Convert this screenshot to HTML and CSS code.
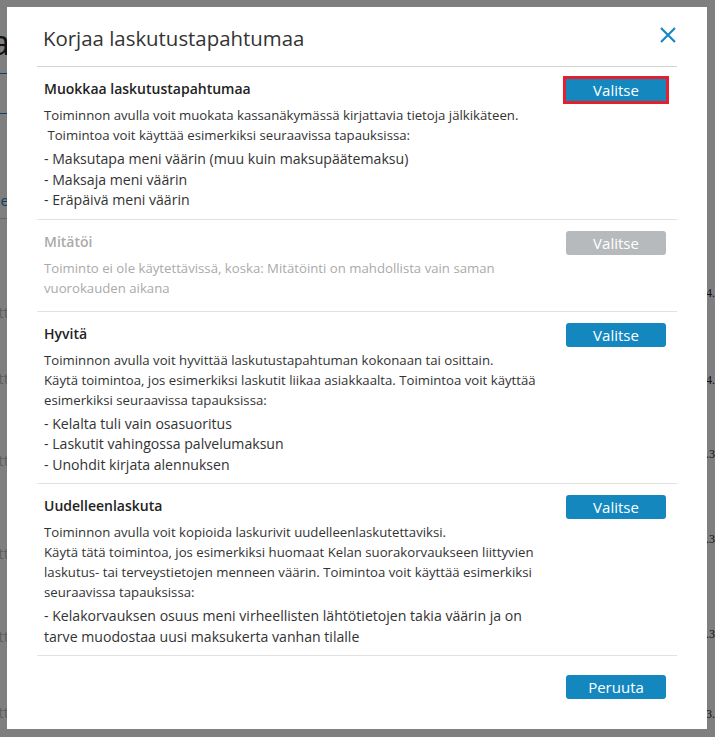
FILE: index.html
```html
<!DOCTYPE html>
<html lang="fi">
<head>
<meta charset="utf-8">
<title>Korjaa laskutustapahtumaa</title>
<link rel="stylesheet" href="styles.css">
</head>
<body>
<div class="bg">
  <div class="bg-left">
    <div class="bg-title"><span>a</span></div>
    <div class="bg-line blue l1"></div>
    <div class="bg-line blue l2"></div>
    <div class="bg-link"><span>e</span></div>
    <div class="bg-line grey"></div>
    <div class="bg-rows">
      <div class="bg-row r1"><span>tt</span></div>
      <div class="bg-row r2"><span>tt</span></div>
      <div class="bg-row r3"><span>tt</span></div>
      <div class="bg-row r4"><span>tt</span></div>
      <div class="bg-row r5"><span>tt</span></div>
      <div class="bg-row r6"><span>tt</span></div>
    </div>
  </div>
  <div class="bg-mid"></div>
  <div class="bg-right">
    <div class="bg-num n1">4.2</div>
    <div class="bg-num n2">4.2</div>
    <div class="bg-num n3">.3</div>
    <div class="bg-num n4">.3</div>
    <div class="bg-num n5">.3</div>
    <div class="bg-num n6">3.2</div>
  </div>
</div>
<div class="overlay"></div>
<div class="modal" role="dialog">
  <div class="modal-header">
    <h1 class="modal-title">Korjaa laskutustapahtumaa</h1>
    <button class="close" aria-label="Sulje">
      <svg width="18" height="18" viewBox="0 0 18 18"><path d="M2 2 L16 16 M16 2 L2 16" stroke="#1b86c1" stroke-width="2.2" fill="none"/></svg>
    </button>
  </div>

  <div class="section">
    <div class="section-body">
      <h2 class="section-title">Muokkaa laskutustapahtumaa</h2>
      <p class="desc">Toiminnon avulla voit muokata kassanäkymässä kirjattavia tietoja jälkikäteen.<br>&nbsp;Toimintoa voit käyttää esimerkiksi seuraavissa tapauksissa:</p>
      <ul class="list">
        <li>- Maksutapa meni väärin (muu kuin maksupäätemaksu)</li>
        <li>- Maksaja meni väärin</li>
        <li>- Eräpäivä meni väärin</li>
      </ul>
    </div>
    <span class="marker"><button class="btn btn-marked">Valitse</button></span>
  </div>

  <div class="section">
    <div class="section-body disabled">
      <h2 class="section-title">Mitätöi</h2>
      <p class="desc">Toiminto ei ole käytettävissä, koska: Mitätöinti on mahdollista vain saman<br>vuorokauden aikana</p>
      <div class="list-empty"></div>
    </div>
    <button class="btn btn-disabled">Valitse</button>
  </div>

  <div class="section">
    <div class="section-body">
      <h2 class="section-title">Hyvitä</h2>
      <p class="desc">Toiminnon avulla voit hyvittää laskutustapahtuman kokonaan tai osittain.<br>Käytä toimintoa, jos esimerkiksi laskutit liikaa asiakkaalta. Toimintoa voit käyttää<br>esimerkiksi seuraavissa tapauksissa:</p>
      <ul class="list">
        <li>- Kelalta tuli vain osasuoritus</li>
        <li>- Laskutit vahingossa palvelumaksun</li>
        <li>- Unohdit kirjata alennuksen</li>
      </ul>
    </div>
    <button class="btn">Valitse</button>
  </div>

  <div class="section">
    <div class="section-body">
      <h2 class="section-title">Uudelleenlaskuta</h2>
      <p class="desc">Toiminnon avulla voit kopioida laskurivit uudelleenlaskutettaviksi.<br>Käytä tätä toimintoa, jos esimerkiksi huomaat Kelan suorakorvaukseen liittyvien<br>laskutus- tai terveystietojen menneen väärin. Toimintoa voit käyttää esimerkiksi<br>seuraavissa tapauksissa:</p>
      <ul class="list">
        <li>- Kelakorvauksen osuus meni virheellisten lähtötietojen takia väärin ja on<br>tarve muodostaa uusi maksukerta vanhan tilalle</li>
      </ul>
    </div>
    <button class="btn">Valitse</button>
  </div>

  <div class="modal-footer">
    <button class="btn">Peruuta</button>
  </div>
</div>
</body>
</html>
```

FILE: styles.css
```css
* { box-sizing: border-box; }
html, body { margin: 0; padding: 0; }
body {
  width: 715px;
  height: 737px;
  overflow: hidden;
  background: #fff;
  font-family: "Open Sans", "Noto Sans", sans-serif;
  color: #333;
}

/* background page (under the overlay) */
.bg {
  display: flex;
  height: 737px;
}
.bg-left {
  width: 8px;
  display: flex;
  flex-direction: column;
}
.bg-title, .bg-link, .bg-row {
  display: flex;
  justify-content: flex-end;
  white-space: nowrap;
}
.bg-title {
  margin-top: 22px;
  margin-right: -2px;
  font-size: 34px;
  line-height: 40px;
  color: #222;
}
.bg-line { height: 1px; width: 8px; }
.bg-line.blue { background: #2a7fb8; }
.bg-line.l1 { margin-top: 11px; }
.bg-line.l2 { margin-top: 39px; }
.bg-line.grey { background: #ccc; margin-top: 8px; }
.bg-link {
  margin-top: 76px;
  margin-right: -1px;
  font-size: 15px;
  line-height: 20px;
  color: #2a7fb8;
}
.bg-rows { display: flex; flex-direction: column; }
.bg-row {
  font-size: 15px;
  line-height: 18px;
  color: #bbb;
  margin-right: -1px;
}
.bg-row.r1 { margin-top: 84px; }
.bg-row.r2 { margin-top: 48px; }
.bg-row.r3 { margin-top: 64px; }
.bg-row.r4 { margin-top: 75px; }
.bg-row.r5 { margin-top: 65px; }
.bg-row.r6 { margin-top: 58px; }
.bg-mid { flex: 1; }
.bg-right {
  width: 9px;
  display: flex;
  flex-direction: column;
  white-space: nowrap;
  font-family: "Liberation Serif", serif;
  font-size: 12px;
  line-height: 14px;
  color: #222;
}
.bg-num.n1 { margin-top: 286px; }
.bg-num.n2 { margin-top: 73px; }
.bg-num.n3 { margin-top: 60px; }
.bg-num.n4 { margin-top: 71px; }
.bg-num.n5 { margin-top: 81px; }
.bg-num.n6 { margin-top: 66px; }

.overlay {
  position: fixed;
  inset: 0;
  background: rgba(0, 0, 0, 0.5);
}

/* modal */
.modal {
  position: fixed;
  left: 7px;
  top: 7px;
  width: 700px;
  height: 722px;
  background: #fff;
  padding: 0 30px;
}
.modal-header {
  display: flex;
  align-items: center;
  justify-content: space-between;
  height: 60px;
  padding: 0 0 0 6px;
  border-bottom: 1px solid #d4d4d4;
}
.modal-title {
  margin: 0;
  font-size: 20.4px;
  font-weight: 400;
  color: #333;
  line-height: 28px;
  padding-top: 3px;
}
.close {
  border: 0;
  background: none;
  padding: 0;
  margin-top: -4px;
  width: 18px;
  height: 18px;
  display: flex;
}

.section {
  display: flex;
  align-items: flex-start;
  justify-content: space-between;
  padding: 11px 11px 8px 7px;
  border-bottom: 1px solid #e1e1e1;
}
.section-title {
  margin: 0;
  font-size: 14px;
  line-height: 22px;
  font-weight: 600;
  color: #222;
}
.desc {
  margin: 5px 0 0;
  font-size: 13.2px;
  line-height: 20px;
  color: #333;
}
.list {
  list-style: none;
  margin: 4px 0 0;
  padding: 0;
  font-size: 14.1px;
  line-height: 20.5px;
  color: #333;
}
.list-empty { height: 5px; }
.disabled .section-title,
.disabled .desc { color: #aaa; }

.btn {
  flex: none;
  width: 100px;
  height: 24px;
  border: 0;
  border-radius: 3px;
  background: #1487bf;
  color: #fff;
  font-family: inherit;
  font-size: 15px;
  line-height: 24px;
  padding: 0;
}
.marker {
  flex: none;
  display: flex;
  border: 3px solid #e3202b;
  margin: -2px -3px 0 0;
}
.btn-marked {
  width: 100px;
  height: 22px;
  line-height: 22px;
  border-radius: 0;
}
.btn-disabled { background: #b7babd; }

.modal-footer {
  display: flex;
  justify-content: flex-end;
  padding: 19px 11px 0 0;
}
```
